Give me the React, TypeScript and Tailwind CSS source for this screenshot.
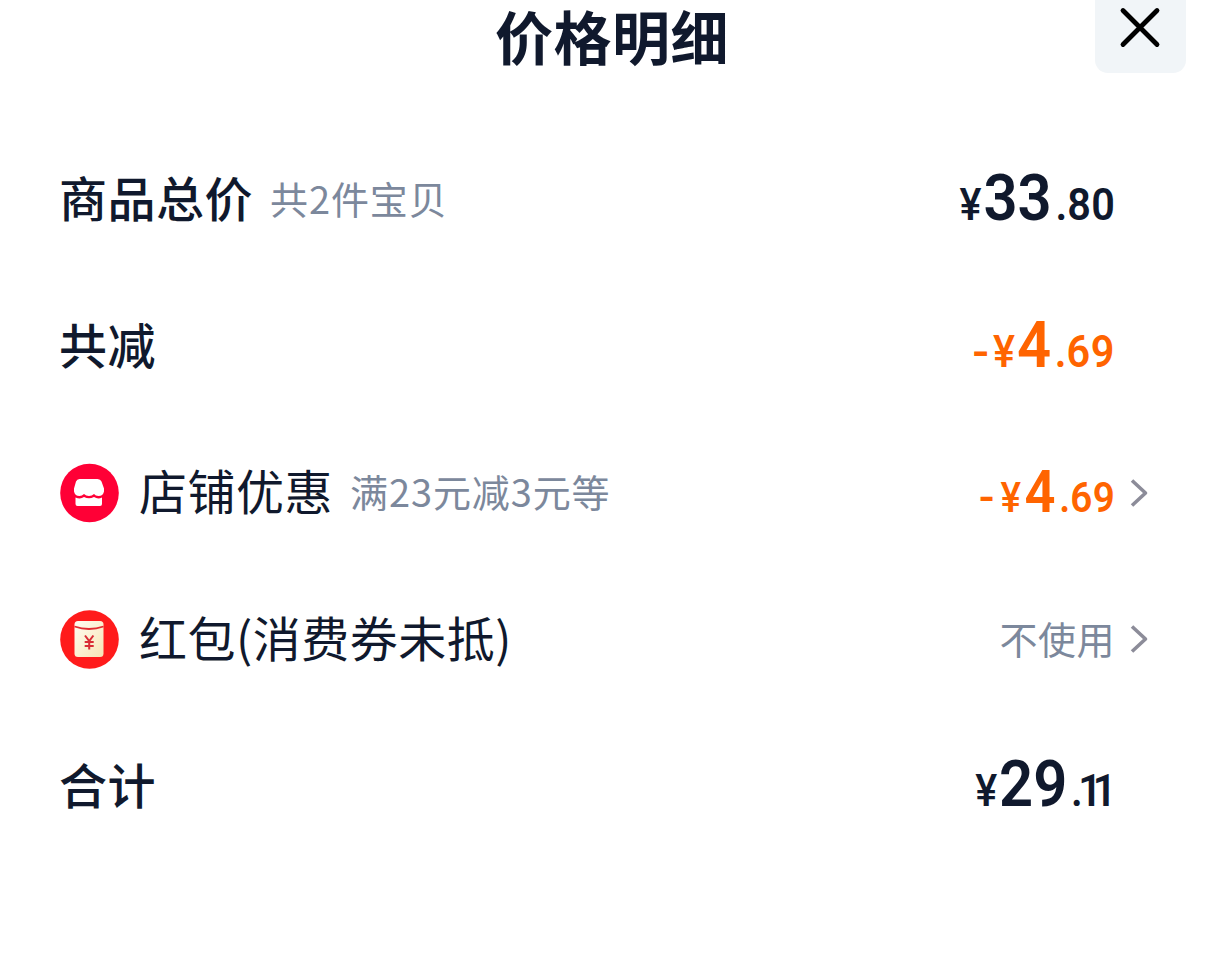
import type { ReactNode } from 'react'
import { clsx } from 'clsx'

interface PriceProps {
  yuan: string
  cents: string
  discount?: boolean
  compact?: boolean
  narrowCents?: boolean
}

function Price({ yuan, cents, discount, compact, narrowCents }: PriceProps) {
  return (
    <div
      className={clsx(
        "flex origin-right scale-x-92 items-baseline font-['Roboto','Noto_Sans_CJK_SC',sans-serif] leading-none",
        discount ? 'text-[#ff6400]' : 'text-[#10192d]',
        compact ? 'pb-[3px] text-[42px]' : 'text-[45px]',
        !compact && (narrowCents ? 'pb-[4px]' : 'pb-[2px]'),
      )}
    >
      {discount && (
        <span className={clsx('inline-block origin-right scale-x-115 font-semibold', compact ? 'mr-[6px]' : 'mr-[4px]')}>
          -
        </span>
      )}
      <span className={clsx('font-medium', compact ? 'mr-[4px]' : 'mr-[2px]')}>¥</span>
      <span className={clsx('font-[650]', compact ? 'text-[59px]' : 'text-[65px]')}>{yuan}</span>
      <span className={clsx('ml-[4px] font-semibold', narrowCents && 'tracking-[-5px]')}>.</span>
      <span className={clsx('font-semibold', narrowCents ? 'mr-[9px] tracking-[-10px]' : 'tracking-[0.5px]')}>
        {cents}
      </span>
    </div>
  )
}

function Chevron() {
  return (
    <svg viewBox="0 0 20 30" className="h-[30px] w-5" fill="none" stroke="#8c8c99" strokeWidth="3.6">
      <path d="M3 2.5 16.5 15 3 27.5" strokeLinejoin="round" />
    </svg>
  )
}

function ShopIcon() {
  return (
    <svg viewBox="0 0 60 60" className="mr-5 size-[60px] shrink-0">
      <circle cx="30.5" cy="30" r="29.3" fill="#ff0036" />
      <path
        d="M20.5 16h18q3 0 4 2.5l2.5 7v3q-1 4.5-5.5 4.5-3 0-4.5-2-2 2-5 2t-5-2q-2 2-4.5 2-4.5 0-5.5-4.5v-3l2-7q1-2.5 3.5-2.5Z"
        fill="#fff"
      />
      <path d="M16.5 34.5q5 2 8.5-.5 5 2.5 10 0 4 2.5 8 .5v6.5q0 2-2 2H18.5q-2 0-2-2Z" fill="#fff" />
    </svg>
  )
}

function RedPacketIcon() {
  return (
    <svg viewBox="0 0 60 60" className="mr-5 size-[60px] shrink-0">
      <defs>
        <linearGradient id="packet" x1="0" y1="0" x2="1" y2="1">
          <stop offset="0" stopColor="#fffdf2" />
          <stop offset="1" stopColor="#f7e5b5" />
        </linearGradient>
      </defs>
      <circle cx="30.5" cy="30.5" r="29.3" fill="#ff1b1b" />
      <rect x="15.5" y="12" width="29" height="36" rx="3.5" fill="url(#packet)" />
      <path d="M15.5 17.5q14.5 5 29 0" fill="none" stroke="#e02b30" strokeWidth="1.8" />
      <path d="m26 26.5 4.2 5.5 4.2-5.5m-4.2 5v9m-4.5-7.5h9m-9 4h9" fill="none" stroke="#d92c35" strokeWidth="2" />
    </svg>
  )
}

interface RowProps {
  label: string
  note?: string
  icon?: ReactNode
  arrow?: boolean
  children: ReactNode
}

function Row({ label, note, icon, arrow, children }: RowProps) {
  return (
    <li className="flex h-[146.7px] items-center">
      {icon}
      <span className={clsx('pb-[7px] text-[48px] leading-none tracking-[0.5px]', icon ? 'font-normal' : 'font-medium')}>
        {label}
      </span>
      {note && (
        <span className="ml-[17px] pb-[3px] text-[38px] leading-none tracking-[0.9px] text-[#7c889c]">{note}</span>
      )}
      <div className="ml-auto">{children}</div>
      <div className="flex w-[95px] pl-[14px]">{arrow && <Chevron />}</div>
    </li>
  )
}

export default function App() {
  return (
    <main className="h-[954px] overflow-hidden bg-white font-['Noto_Sans_CJK_SC',sans-serif] text-[#10192d]">
      <header className="grid h-[126px] grid-cols-[1fr_auto_1fr] items-start">
        <h1 className="col-start-2 ml-[14px] pt-[11px] font-['Roboto','Noto_Sans_CJK_SC',sans-serif] text-[58px] leading-none font-bold tracking-[0.5px]">
          价格明细
        </h1>
        <button
          aria-label="关闭"
          className="mr-6 flex h-[73px] w-[91px] items-start justify-center justify-self-end rounded-b-[13px] bg-[#f1f5f8] pt-[6px] pr-px"
        >
          <svg viewBox="0 0 42 42" className="size-[42px]" stroke="#000" strokeWidth="4.8" strokeLinecap="round">
            <path d="M4 4.5 38 38.5M38 4.5 4 38.5" />
          </svg>
        </button>
      </header>

      <ul className="pl-[59px]">
        <Row label="商品总价" note="共2件宝贝">
          <Price yuan="33" cents="80" />
        </Row>
        <Row label="共减">
          <Price yuan="4" cents="69" discount />
        </Row>
        <Row label="店铺优惠" note="满23元减3元等" icon={<ShopIcon />} arrow>
          <Price yuan="4" cents="69" discount compact />
        </Row>
        <Row label="红包(消费券未抵)" icon={<RedPacketIcon />} arrow>
          <span className="text-[38px] leading-none tracking-[0.5px] text-[#7c889c]">不使用</span>
        </Row>
        <Row label="合计">
          <Price yuan="29" cents="11" narrowCents />
        </Row>
      </ul>
    </main>
  )
}
